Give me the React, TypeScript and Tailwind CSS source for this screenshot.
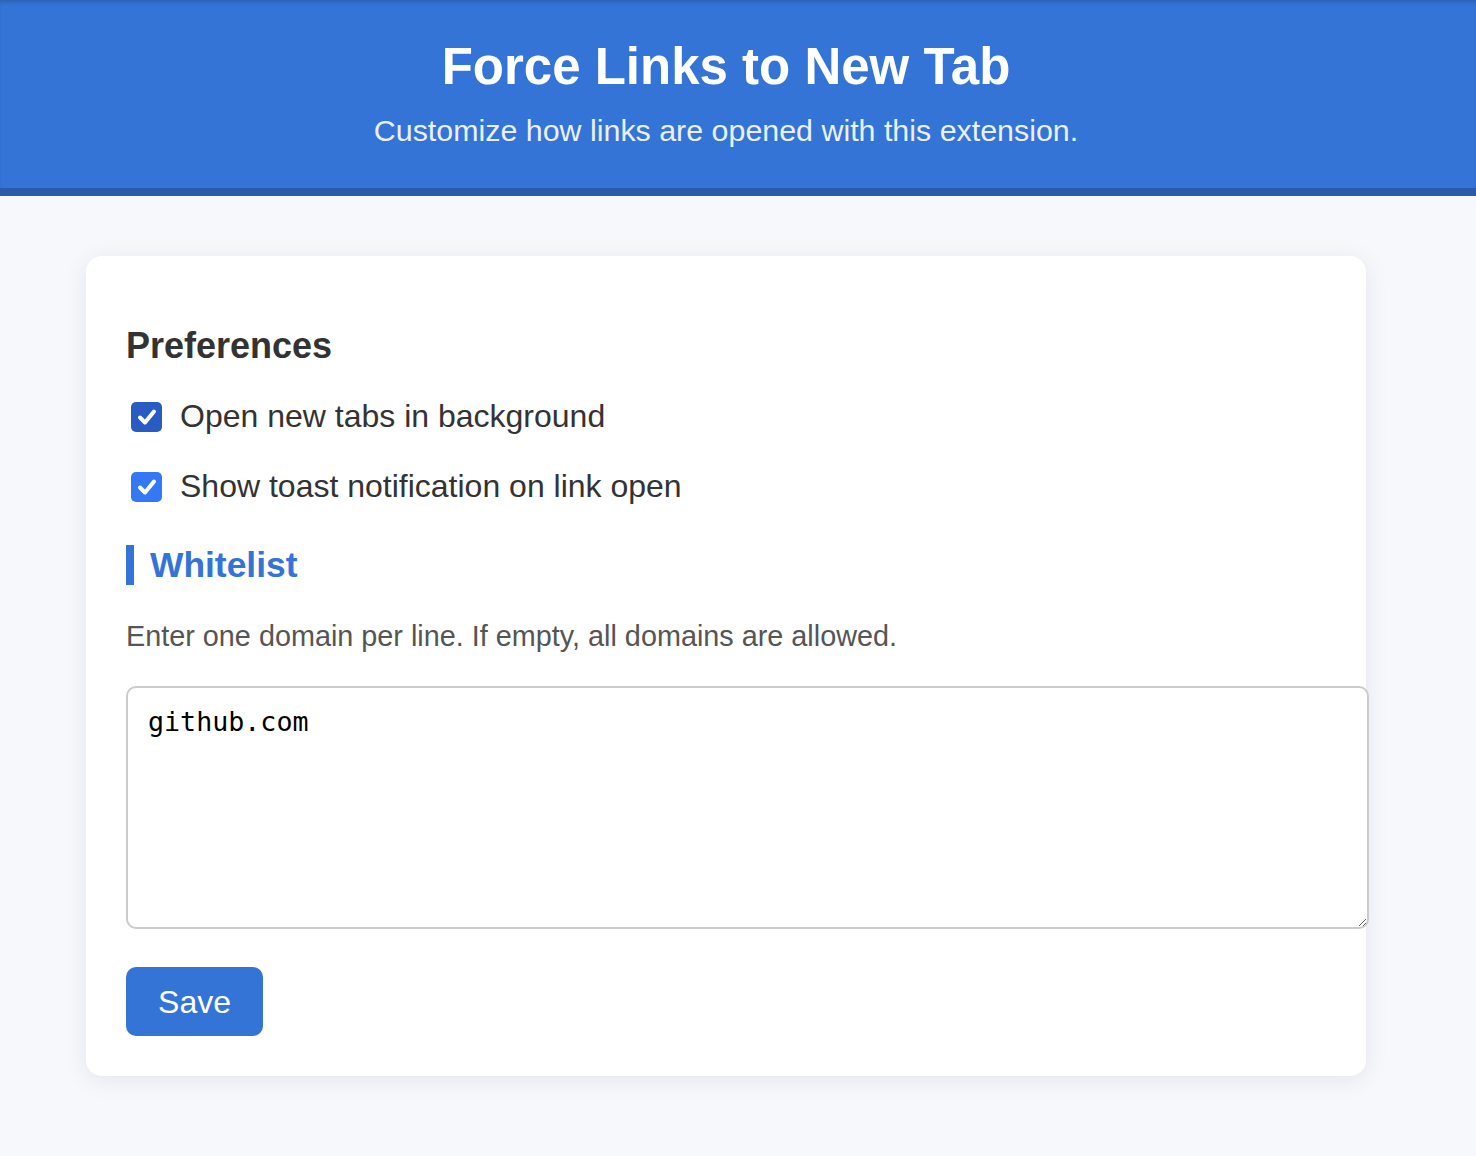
import React from "react";

function Check({ dark }: { dark?: boolean }) {
  return (
    <div
      className={`ml-[5px] flex h-[30px] w-[31px] shrink-0 items-center justify-center rounded-[5px] ${
        dark ? "bg-[#2a5bc2]" : "bg-[#3478f6]"
      }`}
    >
      <svg width="20" height="18" viewBox="0 0 20 18" fill="none">
        <path d="M3 9.5 L8 14.5 L17 3.5" stroke="white" strokeWidth="4" strokeLinecap="round" strokeLinejoin="round" />
      </svg>
    </div>
  );
}

export default function App() {
  return (
    <div className="min-h-screen bg-[#f7f8fc] font-['Liberation_Sans',Arial,sans-serif] pb-[80px]">
      <header className="h-[196px] border-b-[8px] border-[#2a5aa8] bg-[#3474d6] pt-[37px] pr-[24px] text-center text-white shadow-[inset_0_4px_4px_-2px_rgba(0,0,0,0.18)]">
        <h1 className="text-[51px] font-bold leading-[60px]">Force Links to New Tab</h1>
        <p className="mt-[16px] text-[30.4px] leading-[34px] text-[#eaf1fc]">
          Customize how links are opened with this extension.
        </p>
      </header>
      <main className="pt-[60px]">
        <div className="ml-[86px] w-[1280px] rounded-[16px] bg-white p-[40px] shadow-[0_4px_24px_rgba(20,30,60,0.08)]">
          <h2 className="mt-[29px] text-[36px] font-bold leading-[41px] text-[#333]">Preferences</h2>
          <label className="mt-[32px] flex items-center gap-[18px] text-[32px] leading-[37px] text-[#333]">
            <Check dark />
            <span>Open new tabs in background</span>
          </label>
          <label className="mt-[33px] flex items-center gap-[18px] text-[32px] leading-[37px] text-[#333]">
            <Check />
            <span>Show toast notification on link open</span>
          </label>
          <h3 className="mt-[40px] border-l-[8px] border-[#3474d6] pl-[16px] text-[35.4px] font-bold leading-[40px] text-[#3474d6]">
            Whitelist
          </h3>
          <p className="mt-[35px] text-[28.8px] leading-[32px] text-[#555]">
            Enter one domain per line. If empty, all domains are allowed.
          </p>
          <textarea
            className="mt-[34px] block h-[243px] w-[1243px] rounded-[10px] border-2 border-[#cbcbcb] bg-white px-[20px] pt-[14px] font-['DejaVu_Sans_Mono',monospace] text-[26.67px] text-black outline-none"
            defaultValue="github.com"
          />
          <button className="mt-[38px] h-[69px] w-[137px] rounded-[10px] bg-[#3474d6] text-[32px] text-white">
            Save
          </button>
        </div>
      </main>
    </div>
  );
}
